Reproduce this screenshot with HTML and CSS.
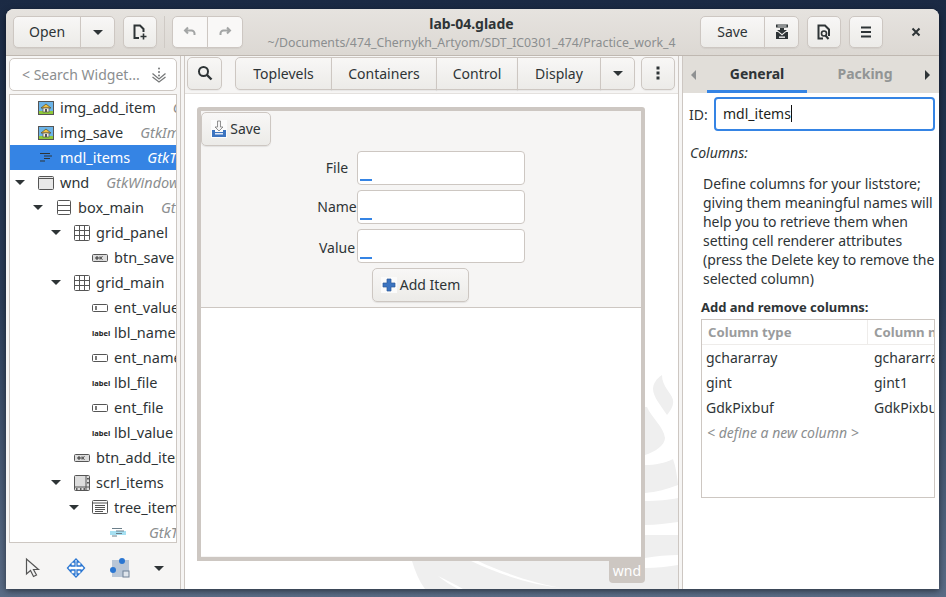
FILE: index.html
```html
<!DOCTYPE html>
<html lang="en">
<head>
    <meta charset="UTF-8">
    <title>lab-04.glade</title>
    <link rel="stylesheet" href="styles.css">
</head>
<body>
<svg class="defs" width="0" height="0">
    <defs>
        <symbol id="i-pic" viewBox="0 0 16 16">
            <rect x="0.5" y="1.5" width="15" height="13" fill="#6cb4e8" stroke="#555"/>
            <rect x="1" y="11" width="14" height="3" fill="#8fc93a"/>
            <path d="M3 8l5-4 5 4z" fill="#f0c040" stroke="#5a4a20" stroke-width=".7"/>
            <rect x="5" y="8" width="6" height="4" fill="#f5f0e0" stroke="#555" stroke-width=".7"/>
            <rect x="7" y="9" width="2" height="3" fill="#555"/>
        </symbol>
        <symbol id="i-model" viewBox="0 0 16 16">
            <path d="M2 3.500h10M6 6h8M6 8.500h6M2 11h5" fill="none" stroke="currentColor" stroke-width="1"/>
        </symbol>
        <symbol id="i-window" viewBox="0 0 16 16">
            <rect x="0.5" y="1.5" width="15" height="13" rx="1" fill="#e8e8e8" stroke="#555"/>
            <path d="M1 3.500h14" stroke="#555" stroke-width="1"/>
        </symbol>
        <symbol id="i-box" viewBox="0 0 16 16">
            <rect x="1.500" y="0.500" width="13" height="14" rx="1" fill="none" stroke="#555"/>
            <path d="M2 5.500h12M2 10.500h12" stroke="#555"/>
        </symbol>
        <symbol id="i-grid" viewBox="0 0 16 16">
            <rect x="0.500" y="0.500" width="15" height="15" rx="1" fill="none" stroke="#555"/>
            <path d="M5.500 1v14M10.500 1v14M1 5.500h14M1 10.500h14" stroke="#555"/>
        </symbol>
        <symbol id="i-btn" viewBox="0 0 16 16">
            <rect x="0.500" y="4.500" width="15" height="7" rx="1" fill="#ddd" stroke="#555"/>
            <path d="M4 7h2v2H4zM8 6.500v3M8.500 8l2-1.500M8.500 8l2 1.500" fill="none" stroke="#222" stroke-width=".9"/>
        </symbol>
        <symbol id="i-entry" viewBox="0 0 16 16">
            <rect x="0.500" y="4.500" width="15" height="7" rx="1" fill="#fff" stroke="#555"/>
            <path d="M4 6v4" stroke="#222" stroke-width="1.200"/>
        </symbol>
        <symbol id="i-scroll" viewBox="0 0 16 16">
            <rect x="0.500" y="0.500" width="15" height="15" rx="1" fill="#ddd" stroke="#555"/>
            <path d="M12 1v14M1 12h14" stroke="#555"/>
            <path d="M13.200 3h1.500v1.500h-1.500zM13.200 7h1.500v1.500h-1.500zM2 13.200h1.500v1.500H2zM6 13.200h1.500v1.500H6zM9.500 13.200h1.500v1.500H9.500z" fill="#333"/>
        </symbol>
        <symbol id="i-tree" viewBox="0 0 16 16">
            <rect x="0.500" y="0.500" width="15" height="13" rx="1" fill="none" stroke="#555"/>
            <path d="M1 3h14M3 5.500h10M3 7.500h10M3 9.500h10M3 11.500h8" stroke="#555"/>
        </symbol>
    </defs>
</svg>

<div class="window">
    <header class="headerbar">
        <div class="group">
            <button class="btn wide-open"><span class="up">Open</span></button>
            <button class="btn square"><span class="arrow-down"></span></button>
        </div>
        <button class="btn square solo">
            <svg width="16" height="16" viewBox="0 0 16 16"><path d="M7 14H2.500V1.500H8l3.500 3.500v3" fill="none" stroke="#2e3436" stroke-width="2"/><path d="M11.500 9.500v6M8.500 12.500h6" stroke="#2e3436" stroke-width="1.600"/></svg>
        </button>
        <span class="vsep"></span>
        <div class="group">
            <button class="btn undo light">
                <svg width="16" height="16" viewBox="0 0 16 16"><path d="M6 3.500L3 6.500l3 3M3.500 6.500h6a3 3 0 0 1 3 3V11" fill="none" stroke="#a3a5a5" stroke-width="2"/></svg>
            </button>
            <button class="btn undo light">
                <svg width="16" height="16" viewBox="0 0 16 16"><path d="M10 3.500l3 3-3 3M12.500 6.500h-6a3 3 0 0 0-3 3V11" fill="none" stroke="#a3a5a5" stroke-width="2"/></svg>
            </button>
        </div>
        <div class="title">
            <div class="title-main">lab-04.glade</div>
            <div class="title-sub">~/Documents/474_Chernykh_Artyom/SDT_IC0301_474/Practice_work_4</div>
        </div>
        <div class="group">
            <button class="btn wide-save"><span class="up">Save</span></button>
            <button class="btn square">
                <svg width="16" height="16" viewBox="0 0 16 16"><path d="M2 .500h12v3H2z" fill="#2e3436"/><path d="M3.500 1.500h9v1h-9z" fill="#eee"/><path d="M6 4h4v2h3l-5 4-5-4h3z" fill="#2e3436"/><path d="M2 8h2l4 3.500L12 8h2v7H2z" fill="#2e3436"/><rect x="5" y="12.500" width="6" height="1.300" fill="#fff"/></svg>
            </button>
        </div>
        <button class="btn square solo">
            <svg width="16" height="16" viewBox="0 0 16 16"><path d="M7 14.500H2.500v-13H9l4 4V12" fill="none" stroke="#2e3436" stroke-width="2"/><circle cx="8" cy="9.500" r="2.500" fill="none" stroke="#2e3436" stroke-width="1.600"/><path d="M9.500 11.500l3 3.500" stroke="#2e3436" stroke-width="2"/></svg>
        </button>
        <button class="btn square solo">
            <svg width="16" height="16" viewBox="0 0 16 16"><path d="M3 3.500h10M3 8h10M3 12.500h10" stroke="#2e3436" stroke-width="2"/></svg>
        </button>
        <div class="close">
            <svg width="16" height="16" viewBox="0 0 16 16"><path d="M4.500 4.500l7 7M11.500 4.500l-7 7" stroke="#2e3436" stroke-width="2"/></svg>
        </div>
    </header>

    <div class="main">
        <aside class="left">
            <div class="search">
                <span>&lt; Search Widget...</span>
                <svg width="16" height="16" viewBox="0 0 16 16"><path d="M1.500 6.500L8 12l6.500-5.500M1.500 10L8 15l6.500-5" fill="none" stroke="#77797a" stroke-width="1.300"/><circle cx="8" cy="1.500" r="1" fill="#77797a"/><circle cx="8" cy="5" r="1" fill="#77797a"/><circle cx="8" cy="8.500" r="1" fill="#77797a"/></svg>
            </div>
            <div class="tree">
                <div class="row lv0"><span class="slot"></span><svg class="ic"><use href="#i-pic"/></svg><span class="name">img_add_item</span><span class="type">GtkImage</span></div>
                <div class="row lv0"><span class="slot"></span><svg class="ic"><use href="#i-pic"/></svg><span class="name">img_save</span><span class="type">GtkImage</span></div>
                <div class="row lv0 selected"><span class="slot"></span><svg class="ic"><use href="#i-model"/></svg><span class="name">mdl_items</span><span class="type">GtkTreeStore</span></div>
                <div class="row lv0"><span class="slot"><span class="arrow-down"></span></span><svg class="ic"><use href="#i-window"/></svg><span class="name">wnd</span><span class="type">GtkWindow</span></div>
                <div class="row lv1"><span class="slot"><span class="arrow-down"></span></span><svg class="ic"><use href="#i-box"/></svg><span class="name">box_main</span><span class="type">GtkBox</span></div>
                <div class="row lv2"><span class="slot"><span class="arrow-down"></span></span><svg class="ic"><use href="#i-grid"/></svg><span class="name">grid_panel</span></div>
                <div class="row lv3"><span class="slot"></span><svg class="ic"><use href="#i-btn"/></svg><span class="name">btn_save</span></div>
                <div class="row lv2"><span class="slot"><span class="arrow-down"></span></span><svg class="ic"><use href="#i-grid"/></svg><span class="name">grid_main</span></div>
                <div class="row lv3"><span class="slot"></span><svg class="ic"><use href="#i-entry"/></svg><span class="name">ent_value</span></div>
                <div class="row lv3"><span class="slot"></span><span class="ic lbl-ic">label</span><span class="name">lbl_name</span></div>
                <div class="row lv3"><span class="slot"></span><svg class="ic"><use href="#i-entry"/></svg><span class="name">ent_name</span></div>
                <div class="row lv3"><span class="slot"></span><span class="ic lbl-ic">label</span><span class="name">lbl_file</span></div>
                <div class="row lv3"><span class="slot"></span><svg class="ic"><use href="#i-entry"/></svg><span class="name">ent_file</span></div>
                <div class="row lv3"><span class="slot"></span><span class="ic lbl-ic">label</span><span class="name">lbl_value</span></div>
                <div class="row lv2"><span class="slot"></span><svg class="ic"><use href="#i-btn"/></svg><span class="name">btn_add_item</span></div>
                <div class="row lv2"><span class="slot"><span class="arrow-down"></span></span><svg class="ic"><use href="#i-scroll"/></svg><span class="name">scrl_items</span></div>
                <div class="row lv3"><span class="slot"><span class="arrow-down"></span></span><svg class="ic"><use href="#i-tree"/></svg><span class="name">tree_items</span></div>
                <div class="row lv4"><span class="slot"></span><svg class="ic model-faint"><use href="#i-model"/></svg><span class="type">GtkTreeSelection</span></div>
            </div>
            <div class="tools">
                <svg width="18" height="22" viewBox="0 0 18 22"><path d="M2.500 2v15l4-3.500 3 6 3-1.500-3-5.500h5z" fill="#f4f4f4" stroke="#555" stroke-width="1.200"/></svg>
                <svg width="20" height="20" viewBox="0 0 20 20"><path d="M10 1l3 3h-2v4h4V6l3.500 4-3.500 4v-2h-4v4h2l-3 3-3-3h2v-4H5v2l-3.500-4L5 6v2h4V4H7z" fill="#fff" stroke="#2a76d2" stroke-width="1.300"/></svg>
                <svg width="20" height="20" viewBox="0 0 20 20"><rect x="2" y="2" width="17" height="17" fill="#b9c6d6"/><rect x="13" y="13" width="6" height="6" fill="#dfe5ec" stroke="#6f8096"/><circle cx="12" cy="3" r="3" fill="#2a76d2"/><circle cx="3" cy="12" r="3" fill="#2a76d2"/></svg>
                <span class="arrow-down"></span>
            </div>
        </aside>

        <section class="center">
            <div class="palette-bar">
                <button class="btn square tall">
                    <svg width="16" height="16" viewBox="0 0 16 16"><circle cx="6.500" cy="6.500" r="4.500" fill="none" stroke="#2e3436" stroke-width="2"/><path d="M10 10l4.500 4.500" stroke="#2e3436" stroke-width="2.400"/></svg>
                </button>
                <div class="group palette">
                    <button class="btn pal-a">Toplevels</button>
                    <button class="btn pal-b">Containers</button>
                    <button class="btn pal-c">Control</button>
                    <button class="btn pal-d">Display</button>
                    <button class="btn pal-e"><span class="arrow-down"></span></button>
                </div>
                <button class="btn kebab">
                    <svg width="16" height="16" viewBox="0 0 16 16"><path d="M6.500 1.500h3v3h-3zM6.500 6.500h3v3h-3zM6.500 11.500h3v3h-3z" fill="#2e3436"/></svg>
                </button>
            </div>
            <div class="canvas">
                <svg class="watermark" width="493" height="495" viewBox="185 94 493 495">
                    <g fill="#efefef">
                        <path d="M662 375c-6 4-9 9-9 14 0 8 9 18 14 26 4-5 7-10 6-15-2-8-11-13-11-25z"/>
                        <path d="M647 407c4 10 17 20 18 31 0 7-10 14-20 17v-48z"/>
                        <path d="M645 465c10 0 20-2 28-6 3 8 4 17 5 26-10 4-22 7-33 8z"/>
                        <path d="M645 501c12 0 24-1 33-3v24c-10 1-22 3-33 3z"/>
                        <path d="M645 535c12 0 24 0 33 0v20c-10 0-22 1-33 3z"/>
                        <path d="M412 561c3 10 7 20 13 28H678V565c-12 2-22 3-33 3v-7z"/>
                    </g>
                    <g fill="#fff">
                        <path d="M478 561c30 14 60 23 85 27-30-3-60-12-92-27z"/>
                        <path d="M438 576c8 4 17 8 25 13h-5c-7-4-14-8-20-13z"/>
                    </g>
                </svg>
                <div class="design">
                    <div class="design-top">
                        <div class="panel-row">
                            <button class="dbtn save-btn">
                                <svg width="16" height="18" viewBox="0 0 16 18"><rect width="16" height="18" fill="#fcfcfc"/><path d="M6.500 1h3v6H12L8 11 4 7h2.500z" fill="#f6f6f6" stroke="#777" stroke-width=".8"/><path d="M1 10h3v2h8v-2h3v7H1z" fill="#3c74c0"/><rect x="4" y="13" width="8" height="1.500" fill="#dfe8f5"/></svg>
                                <span class="up">Save</span>
                            </button>
                        </div>
                        <div class="form-grid">
                            <label class="flabel">File</label><div class="entry"><i></i></div>
                            <label class="flabel">Name</label><div class="entry"><i></i></div>
                            <label class="flabel flabel-low">Value</label><div class="entry"><i></i></div>
                        </div>
                        <div class="add-row">
                            <button class="dbtn add-btn">
                                <svg width="16" height="16" viewBox="0 0 16 16"><rect width="16" height="16" fill="#fbfbfb"/><path d="M6 2h4v4h4v4h-4v4H6v-4H2V6h4z" fill="#3c74c0" stroke="#2c5a9a" stroke-width=".7"/></svg>
                                <span class="up">Add Item</span>
                            </button>
                        </div>
                    </div>
                    <div class="design-tree"></div>
                </div>
                <div class="wnd-tag">wnd</div>
            </div>
        </section>

        <aside class="right">
            <div class="tabs">
                <svg class="tab-arrow" width="8" height="12" viewBox="0 0 8 12"><path d="M6 1v10L1 6z" fill="#8f9192"/></svg>
                <div class="tab active">General</div>
                <div class="tab">Packing</div>
                <svg class="tab-arrow end" width="8" height="12" viewBox="0 0 8 12"><path d="M2 1v10l5-5z" fill="#2e3436"/></svg>
            </div>
            <div class="id-row">
                <span>ID:</span>
                <div class="id-entry">mdl_items<span class="caret"></span></div>
            </div>
            <div class="col-title">Columns:</div>
            <p class="desc">Define columns for your liststore; giving them meaningful names will help you to retrieve them when setting cell renderer attributes (press the Delete key to remove the selected column)</p>
            <div class="add-title">Add and remove columns:</div>
            <div class="table">
                <div class="thead"><span class="c1">Column type</span><span class="c2">Column name</span></div>
                <div class="trow"><span class="c1">gchararray</span><span class="c2">gchararray1</span></div>
                <div class="trow"><span class="c1">gint</span><span class="c2">gint1</span></div>
                <div class="trow"><span class="c1">GdkPixbuf</span><span class="c2">GdkPixbuf1</span></div>
                <div class="trow new"><span class="c1">&lt; define a new column &gt;</span></div>
            </div>
        </aside>
    </div>
</div>
</body>
</html>
```

FILE: styles.css
```css
* {
    box-sizing: border-box;
}
html, body {
    height: 100%;
}
body {
    margin: 0;
    padding: 9px 7px 8px 6px;
    overflow: hidden;
    font-family: "Noto Sans", sans-serif;
    font-size: 14px;
    color: #2e3436;
    background: linear-gradient(180deg, #1b2a44 0%, #2b3d58 50%, #5a6c86 100%);
}
.defs {
    position: absolute;
}
.window {
    height: 580px;
    display: flex;
    flex-direction: column;
    border-radius: 8px 8px 0 0;
    overflow: hidden;
    background: #f6f5f4;
    box-shadow: 0 2px 6px rgba(0, 0, 0, 0.5);
}
.up {
    padding-bottom: 2px;
}

/* header */
.headerbar {
    height: 47px;
    flex: none;
    display: flex;
    align-items: center;
    padding: 0 0 0 7px;
    background: linear-gradient(#e6e3df, #dcd8d3);
    border-bottom: 1px solid #bfb8b1;
}
.btn {
    height: 32px;
    padding: 0;
    border: 1px solid #cdc7c2;
    border-radius: 5px;
    background: linear-gradient(#f8f7f6, #ecebe8);
    font: inherit;
    color: #2e3436;
    display: flex;
    align-items: center;
    justify-content: center;
    box-shadow: 0 1px 1px rgba(0, 0, 0, 0.05);
}
.group {
    display: flex;
}
.group .btn {
    border-radius: 0;
    margin-left: -1px;
}
.group .btn:first-child {
    border-radius: 5px 0 0 5px;
    margin-left: 0;
}
.group .btn:last-child {
    border-radius: 0 5px 5px 0;
}
.square {
    width: 35px;
}
.solo {
    width: 34px;
    margin-left: 8px;
}
.undo {
    width: 36px;
}
.light {
    background: #f9f8f7;
}
.wide-open {
    width: 68px;
}
.wide-save {
    width: 65px;
}
.vsep {
    width: 1px;
    height: 32px;
    margin: 0 7px;
    background: #cfcac5;
}
.title {
    flex: 1;
    min-width: 0;
    text-align: center;
    line-height: 19px;
    padding-top: 1px;
}
.title-main {
    font-weight: 700;
    font-size: 14px;
}
.title-sub {
    font-size: 12.3px;
    color: #8b8e8f;
    white-space: nowrap;
}
.close {
    width: 56px;
    padding-left: 9px;
    display: flex;
    justify-content: center;
}
.arrow-down {
    display: block;
    width: 0;
    height: 0;
    border-left: 5px solid transparent;
    border-right: 5px solid transparent;
    border-top: 5px solid #2e3436;
}

/* layout */
.main {
    flex: 1;
    min-height: 0;
    display: flex;
}
.left {
    width: 175px;
    flex: none;
    display: flex;
    flex-direction: column;
    padding: 2px 3px 0;
    border-right: 1px solid #cdc7c2;
}
.search {
    height: 33px;
    flex: none;
    display: flex;
    align-items: center;
    justify-content: space-between;
    padding: 0 9px 0 12px;
    background: #fff;
    border: 1px solid #cdc7c2;
    border-radius: 5px;
    color: #8b8e8f;
    white-space: nowrap;
}
.tree {
    margin-top: 3px;
    height: 449px;
    flex: none;
    background: #fff;
    border: 1px solid #cdc7c2;
    overflow: hidden;
    font-size: 14.5px;
}
.row {
    height: 25px;
    display: flex;
    align-items: center;
    white-space: nowrap;
    overflow: hidden;
}
.lv1 {
    padding-left: 18px;
}
.lv2 {
    padding-left: 36px;
}
.lv3 {
    padding-left: 54px;
}
.lv4 {
    padding-left: 72px;
}
.slot {
    width: 28px;
    flex: none;
    padding-left: 5px;
}
.ic {
    width: 16px;
    height: 16px;
    flex: none;
    margin-right: 6px;
}
.lbl-ic {
    font-size: 7.5px;
    font-weight: 700;
    line-height: 16px;
    text-align: center;
    color: #222;
}
.name {
    flex: none;
    padding-bottom: 2px;
}
.type {
    flex: none;
    margin-left: 17px;
    padding-bottom: 2px;
    font-style: italic;
    color: #8b8e8f;
}
.model-faint {
    color: #6b7f8a;
    background: linear-gradient(transparent 38%, #a6e0f2 38%, #a6e0f2 62%, transparent 62%);
}
.selected {
    background: #3584e4;
    color: #fff;
}
.selected .type {
    color: #fff;
}
.selected .ic {
    color: #2e3436;
}
.tools {
    flex: 1;
    display: flex;
    align-items: center;
    gap: 24px;
    padding: 4px 0 0 15px;
}

/* center */
.center {
    margin-left: 3px;
    width: 495px;
    flex: none;
    display: flex;
    flex-direction: column;
    border-left: 1px solid #cdc7c2;
    border-right: 1px solid #cdc7c2;
}
.palette-bar {
    height: 38px;
    flex: none;
    display: flex;
    align-items: center;
    padding: 0 0 3px 2px;
    border-bottom: 1px solid #e4e1de;
}
.tall {
    height: 33px;
}
.palette {
    margin-left: 13px;
}
.palette .btn {
    height: 33px;
}
.pal-a {
    width: 97px;
}
.pal-b {
    width: 106px;
}
.pal-c {
    width: 82px;
}
.pal-d {
    width: 84px;
}
.pal-e {
    width: 35px;
}
.kebab {
    width: 34px;
    height: 33px;
    margin-left: 6px;
}
.canvas {
    position: relative;
    flex: 1;
    min-height: 0;
    background: #fff;
    padding: 13px 0 0 12px;
}
.watermark {
    position: absolute;
    left: 0;
    top: 0;
}
.design {
    position: relative;
    width: 448px;
    height: 454px;
    border: 4px solid #cdc7c2;
    border-radius: 3px 3px 0 0;
    background: #f6f5f4;
    display: flex;
    flex-direction: column;
}
.design-top {
    flex: none;
    height: 197px;
    border-bottom: 1px solid #cdc7c2;
}
.panel-row {
    height: 40px;
    padding-top: 1px;
}
.design-tree {
    height: 248px;
    background: #fff;
}
.dbtn {
    height: 34px;
    border: 1px solid #cdc7c2;
    border-radius: 5px;
    background: linear-gradient(#f8f7f6, #ecebe8);
    font: inherit;
    color: #2e3436;
    display: inline-flex;
    align-items: center;
    justify-content: center;
    gap: 3px;
    padding: 0;
    box-shadow: 0 1px 1px rgba(0, 0, 0, 0.08);
}
.save-btn {
    width: 70px;
}
.add-btn {
    width: 97px;
}
.form-grid {
    width: 208px;
    margin: 0 0 0 116px;
    display: grid;
    grid-template-columns: 40px 168px;
    grid-auto-rows: 34px;
    row-gap: 5px;
    align-items: center;
}
.flabel {
    text-align: center;
    white-space: nowrap;
    padding-bottom: 2px;
}
.flabel-low {
    padding: 2px 0 0;
}
.entry {
    position: relative;
    height: 34px;
    background: #fff;
    border: 1px solid #cdc7c2;
    border-radius: 4px;
}
.entry i {
    position: absolute;
    left: 2px;
    bottom: 3px;
    width: 12px;
    height: 2px;
    background: #3584e4;
}
.add-row {
    margin-top: 5px;
    padding-left: 171px;
}
.wnd-tag {
    position: absolute;
    left: 424px;
    top: 466px;
    width: 36px;
    height: 23px;
    background: #cdc7c2;
    color: #fff;
    border-radius: 0 0 4px 4px;
    text-align: center;
    line-height: 22px;
}

/* right */
.right {
    flex: 1;
    min-width: 0;
    background: #fff;
    border-left: 1px solid #cdc7c2;
    margin-left: 3px;
}
.tabs {
    height: 37px;
    display: flex;
    align-items: center;
    background: #e1ded9;
    padding-left: 7px;
}
.tab {
    width: 100px;
    height: 37px;
    line-height: 35px;
    text-align: center;
    font-weight: 700;
    color: #929595;
}
.tab.active {
    margin-left: 9px;
    color: #2e3436;
    border-bottom: 3px solid #3584e4;
}
.tab + .tab {
    margin-left: 8px;
}
.tab-arrow.end {
    margin-left: 8px;
}
.id-row {
    display: flex;
    align-items: center;
    padding: 4px 4px 0 6px;
    gap: 6px;
}
.id-entry {
    width: 221px;
    height: 34px;
    margin-left: auto;
    padding-left: 7px;
    line-height: 30px;
    border: 2px solid #3584e4;
    border-radius: 4px;
    color: #1d1f20;
}
.caret {
    display: inline-block;
    width: 1px;
    height: 17px;
    background: #111;
    vertical-align: -3px;
}
.col-title {
    margin: 12px 0 0 7px;
    font-style: italic;
    line-height: 19px;
}
.desc {
    margin: 12px 4px 0 20px;
    line-height: 19px;
    letter-spacing: -0.04px;
}
.add-title {
    margin: 10px 0 0 18px;
    font-size: 13px;
    font-weight: 700;
    line-height: 19px;
}
.table {
    margin: 2px 4px 0 18px;
    height: 179px;
    border: 1px solid #cdc7c2;
    overflow: hidden;
}
.thead {
    height: 25px;
    display: flex;
    align-items: center;
    border-bottom: 1px solid #eeecea;
    font-size: 13.2px;
    font-weight: 700;
    color: #9a9c9d;
    white-space: nowrap;
}
.thead .c1 {
    border-right: 1px solid #eeecea;
    height: 24px;
    line-height: 24px;
    padding-left: 6px;
}
.trow {
    height: 25px;
    display: flex;
    align-items: center;
    white-space: nowrap;
    color: #2e3436;
}
.trow .c1 {
    padding-left: 4px;
}
.c1 {
    width: 166px;
    flex: none;
}
.c2 {
    flex: none;
    padding-left: 6px;
}
.new .c1 {
    font-style: italic;
    color: #8b8e8f;
    padding-left: 5px;
}
```
